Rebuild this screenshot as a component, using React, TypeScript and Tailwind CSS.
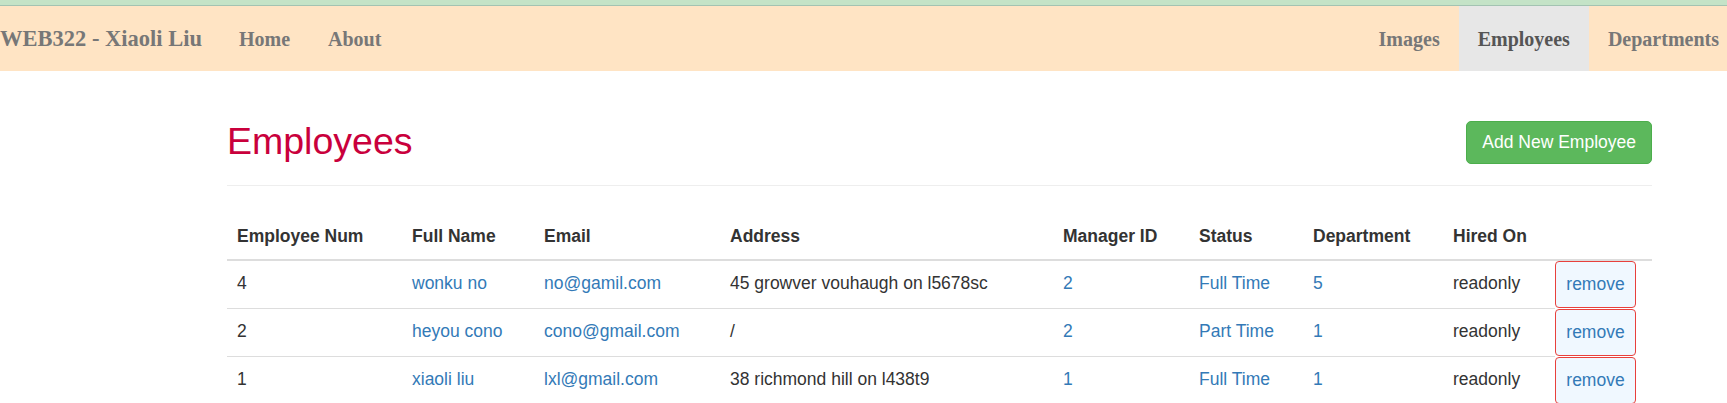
const employees = [
  { num: "4", name: "wonku no", email: "no@gamil.com", address: "45 growver vouhaugh on l5678sc", manager: "2", status: "Full Time", dept: "5" },
  { num: "2", name: "heyou cono", email: "cono@gmail.com", address: "/", manager: "2", status: "Part Time", dept: "1" },
  { num: "1", name: "xiaoli liu", email: "lxl@gmail.com", address: "38 richmond hill on l438t9", manager: "1", status: "Full Time", dept: "1" },
];

const headers = ["Employee Num", "Full Name", "Email", "Address", "Manager ID", "Status", "Department", "Hired On", ""];
const widths = ["w-[175px]", "w-[132px]", "w-[186px]", "w-[333px]", "w-[136px]", "w-[114px]", "w-[140px]", "w-[112px]", "w-[97px]"];

const NavLink = ({ label, active = false, last = false }: { label: string; active?: boolean; last?: boolean }) => (
  <a
    href="#"
    className={
      "flex items-center pl-[19px] " +
      (last ? "pr-[8px] " : "pr-[19px] ") +
      (active ? "bg-[#e7e7e7] text-[#555]" : "text-[#777]")
    }
  >
    {label}
  </a>
);

const App = () => {
  return (
    <div className="w-full min-h-screen bg-white overflow-hidden font-['Liberation_Sans',Arial,sans-serif] text-[17.5px] text-[#333]">
      <div className="h-[6px] bg-[#c4e3c7] border-b border-[#a3c3b2]" />
      <nav className="h-[65px] bg-[#ffe4c4] flex justify-between font-['Liberation_Serif','Times_New_Roman',serif] font-bold text-[20px]">
        <div className="flex">
          <a href="#" className="flex items-center pl-0 pr-[18px] text-[22.5px] text-[#777]">
            WEB322 - Xiaoli Liu
          </a>
          <NavLink label="Home" />
          <NavLink label="About" />
        </div>
        <div className="flex">
          <NavLink label="Images" />
          <NavLink label="Employees" active />
          <NavLink label="Departments" last />
        </div>
      </nav>

      <div className="ml-[227px] w-[1425px] pt-[50px]">
        <div className="flex justify-between items-start pb-[11px] border-b border-[#eee]">
          <h2 className="text-[37.5px] leading-[41px] mb-[12px] text-[#c9003c]">Employees</h2>
          <button className="h-[43px] px-[15px] rounded-[5px] bg-[#5cb85c] border border-[#4cae4c] text-white text-[17.5px]">
            Add New Employee
          </button>
        </div>

        <table className="mt-[28px] w-full table-fixed">
          <colgroup>
            {widths.map((w, i) => (
              <col key={i} className={w} />
            ))}
          </colgroup>
          <thead>
            <tr>
              {headers.map((h, i) => (
                <th key={i} className="text-left font-bold px-[10px] py-[10px] leading-[25px] border-b-2 border-[#ddd]">
                  {h}
                </th>
              ))}
            </tr>
          </thead>
          <tbody>
            {employees.map((e, i) => (
              <tr key={i}>
                <td className="align-top px-[10px] py-[10px] leading-[25px] border-t border-[#ddd]">{e.num}</td>
                <td className="align-top px-[10px] py-[10px] leading-[25px] border-t border-[#ddd] text-[#337ab7]">{e.name}</td>
                <td className="align-top px-[10px] py-[10px] leading-[25px] border-t border-[#ddd] text-[#337ab7]">{e.email}</td>
                <td className="align-top px-[10px] py-[10px] leading-[25px] border-t border-[#ddd]">{e.address}</td>
                <td className="align-top px-[10px] py-[10px] leading-[25px] border-t border-[#ddd] text-[#337ab7]">{e.manager}</td>
                <td className="align-top px-[10px] py-[10px] leading-[25px] border-t border-[#ddd] text-[#337ab7]">{e.status}</td>
                <td className="align-top px-[10px] py-[10px] leading-[25px] border-t border-[#ddd] text-[#337ab7]">{e.dept}</td>
                <td className="align-top px-[10px] py-[10px] leading-[25px] border-t border-[#ddd]">readonly</td>
                <td className="align-top p-0 border-t border-transparent">
                  <button className="w-[81px] h-[47px] rounded-[4px] border border-[#e8403c] bg-[#f0f8ff] text-[#337ab7] text-[17.5px]">
                    remove
                  </button>
                </td>
              </tr>
            ))}
          </tbody>
        </table>
      </div>
    </div>
  );
};

export default App;
